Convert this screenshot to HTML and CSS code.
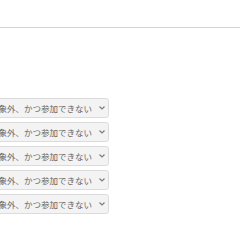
FILE: index.html
```html
<!DOCTYPE html>
<html>
<head lang="ja">
    <meta charset="UTF-8">
    <title></title>
    <link rel="stylesheet" href="styles.css">
</head>
<body>
<div class="head"></div>
<div class="list">
    <div class="sel"><span>対象外、かつ参加できない</span><svg class="arr" width="6" height="4" viewBox="0 0 6 4"><path d="M0.5 0.5L3 3L5.5 0.5" fill="none" stroke="#7a7a7a" stroke-width="1.1"/></svg></div>
    <div class="sel"><span>対象外、かつ参加できない</span><svg class="arr" width="6" height="4" viewBox="0 0 6 4"><path d="M0.5 0.5L3 3L5.5 0.5" fill="none" stroke="#7a7a7a" stroke-width="1.1"/></svg></div>
    <div class="sel"><span>対象外、かつ参加できない</span><svg class="arr" width="6" height="4" viewBox="0 0 6 4"><path d="M0.5 0.5L3 3L5.5 0.5" fill="none" stroke="#7a7a7a" stroke-width="1.1"/></svg></div>
    <div class="sel"><span>対象外、かつ参加できない</span><svg class="arr" width="6" height="4" viewBox="0 0 6 4"><path d="M0.5 0.5L3 3L5.5 0.5" fill="none" stroke="#7a7a7a" stroke-width="1.1"/></svg></div>
    <div class="sel"><span>対象外、かつ参加できない</span><svg class="arr" width="6" height="4" viewBox="0 0 6 4"><path d="M0.5 0.5L3 3L5.5 0.5" fill="none" stroke="#7a7a7a" stroke-width="1.1"/></svg></div>
</div>
</body>
</html>
```
FILE: styles.css
```css
* {
    padding: 0;
    margin: 0;
}
body {
    background: #fff;
    font-family: "Noto Sans CJK JP", "Liberation Sans", sans-serif;
    overflow: hidden;
}
.head {
    height: 27px;
    border-bottom: 1px solid #d4d4d4;
}
.list {
    display: flex;
    flex-direction: column;
    gap: 4px;
    margin-top: 70px;
    margin-left: -17px;
    width: 126px;
}
.sel {
    display: flex;
    align-items: center;
    height: 18px;
    padding: 0 3px 0 6px;
    border: 1px solid #dcdcdc;
    border-radius: 3px;
    background: #f3f3f3;
    color: #666;
    font-size: 8.5px;
    white-space: nowrap;
}
.arr {
    display: block;
    margin-left: auto;
}
```
